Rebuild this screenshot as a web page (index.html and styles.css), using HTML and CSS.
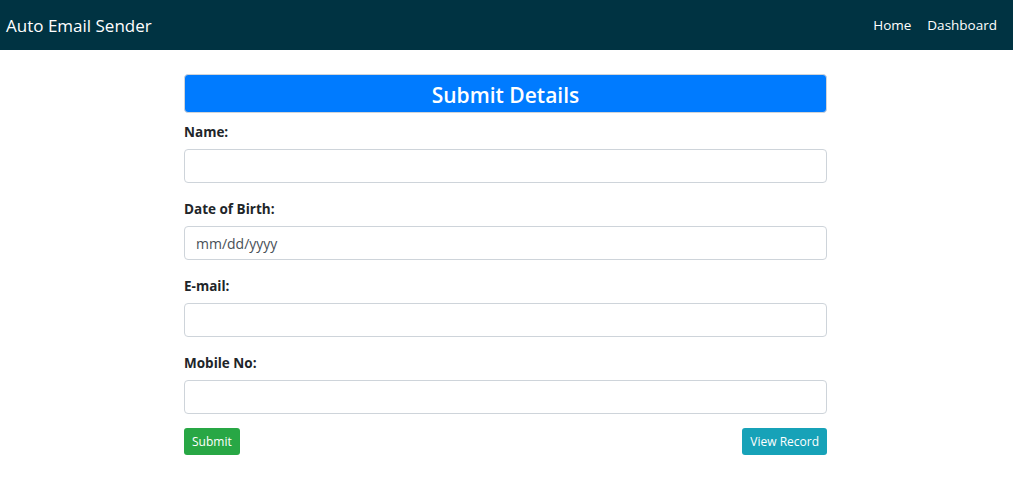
FILE: index.html
```html
<!DOCTYPE html>
<html lang="en">
<head>
<meta charset="utf-8">
<title>Auto Email Sender</title>
<link rel="stylesheet" href="styles.css">
</head>
<body>
<nav class="navbar">
  <a class="brand" href="#">Auto Email Sender</a>
  <div class="nav-links">
    <a href="#">Home</a>
    <a href="#">Dashboard</a>
  </div>
</nav>
<main class="container">
  <h2 class="title">Submit Details</h2>
  <form class="form">
    <div class="group">
      <label for="name">Name:</label>
      <input id="name" type="text" class="control">
    </div>
    <div class="group">
      <label for="dob">Date of Birth:</label>
      <input id="dob" type="text" class="control" placeholder="mm/dd/yyyy">
    </div>
    <div class="group">
      <label for="email">E-mail:</label>
      <input id="email" type="text" class="control">
    </div>
    <div class="group">
      <label for="mobile">Mobile No:</label>
      <input id="mobile" type="text" class="control">
    </div>
    <div class="actions">
      <button type="button" class="btn btn-green">Submit</button>
      <button type="button" class="btn btn-teal">View Record</button>
    </div>
  </form>
</main>
</body>
</html>
```
FILE: styles.css
```css
* { box-sizing: border-box; }
body {
  margin: 0;
  font-family: "Open Sans", "Noto Sans", sans-serif;
  font-size: 14px;
  color: #212529;
  background: #fff;
}
.navbar {
  height: 50px;
  background: #003342;
  display: flex;
  align-items: center;
  justify-content: space-between;
  padding: 0 16px 0 6px;
}
.brand {
  color: #fff;
  text-decoration: none;
  font-size: 17px;
}
.nav-links {
  display: flex;
  gap: 16px;
}
.nav-links a {
  color: #fff;
  text-decoration: none;
  font-size: 13.5px;
}
.container {
  width: 643px;
  margin: 24px 0 0 calc(50% - 322.5px);
}
.title {
  margin: 0;
  height: 39px;
  background: #007bff;
  color: #fff;
  border: 1px solid #d0d4d9;
  border-radius: 4px;
  text-align: center;
  font-size: 21px;
  font-weight: 600;
  line-height: 41px;
}
.form {
  display: flex;
  flex-direction: column;
  padding-top: 9px;
}
.group {
  display: flex;
  flex-direction: column;
  margin-bottom: 16px;
}
.group label {
  font-weight: 700;
  font-size: 13.5px;
  line-height: 21px;
  margin-bottom: 6px;
}
.control {
  height: 34px;
  border: 1px solid #ced4da;
  border-radius: 4px;
  padding: 6px 11px;
  font-family: inherit;
  font-size: 14px;
  color: #495057;
}
.control::placeholder { color: #495057; }
.actions {
  display: flex;
  justify-content: space-between;
  margin-top: -2px;
}
.btn {
  height: 27px;
  border: none;
  border-radius: 3px;
  color: #fff;
  font-family: inherit;
  font-size: 12px;
  padding: 0 8px;
}
.btn-green { background: #28a745; }
.btn-teal { background: #17a2b8; }
```
